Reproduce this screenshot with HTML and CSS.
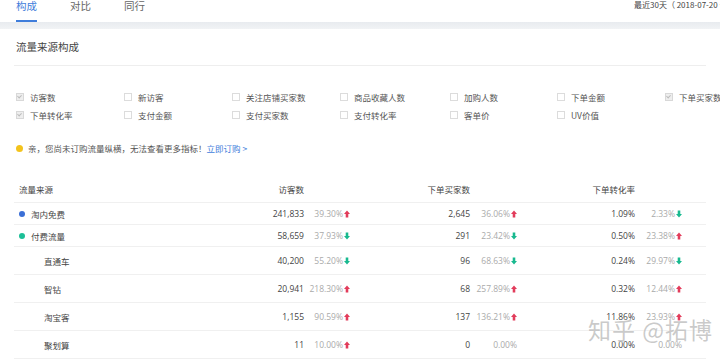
FILE: index.html
```html
<!DOCTYPE html>
<html lang="zh-CN">
<head>
    <meta charset="UTF-8">
    <title>流量来源构成</title>
    <link rel="stylesheet" href="styles.css">
</head>
<body>
    <div class="topbar">
        <a class="tab active">构成</a>
        <a class="tab">对比</a>
        <a class="tab">同行</a>
        <div class="date">最近30天（ 2018-07-20 ~ 2018-08-18 ）</div>
    </div>
    <div class="band"></div>

    <div class="panel">
        <div class="panel-title">流量来源构成</div>

        <div class="metrics">
            <label class="metric"><span class="box checked"></span>访客数</label>
            <label class="metric"><span class="box"></span>新访客</label>
            <label class="metric"><span class="box"></span>关注店铺买家数</label>
            <label class="metric"><span class="box"></span>商品收藏人数</label>
            <label class="metric"><span class="box"></span>加购人数</label>
            <label class="metric"><span class="box"></span>下单金额</label>
            <label class="metric"><span class="box checked"></span>下单买家数</label>
            <label class="metric"><span class="box checked"></span>下单转化率</label>
            <label class="metric"><span class="box"></span>支付金额</label>
            <label class="metric"><span class="box"></span>支付买家数</label>
            <label class="metric"><span class="box"></span>支付转化率</label>
            <label class="metric"><span class="box"></span>客单价</label>
            <label class="metric"><span class="box"></span>UV价值</label>
        </div>

        <div class="notice">
            <span class="notice-dot"></span>
            亲，您尚未订购流量纵横，无法查看更多指标！<a class="link">立即订购 &gt;</a>
        </div>

        <div class="table">
            <div class="row head">
                <div class="name">流量来源</div>
                <div class="num">访客数</div>
                <div></div>
                <div class="num">下单买家数</div>
                <div></div>
                <div class="num">下单转化率</div>
                <div></div>
            </div>
            <div class="row main">
                <div class="name"><span class="dot blue"></span>淘内免费</div>
                <div class="num">241,833</div>
                <div class="pct">39.30%<svg class="arrow up" viewBox="0 0 7 8"><path d="M3.5 0 L7 4 L5 4 L5 8 L2 8 L2 4 L0 4 Z"/></svg></div>
                <div class="num">2,645</div>
                <div class="pct">36.06%<svg class="arrow up" viewBox="0 0 7 8"><path d="M3.5 0 L7 4 L5 4 L5 8 L2 8 L2 4 L0 4 Z"/></svg></div>
                <div class="num">1.09%</div>
                <div class="pct">2.33%<svg class="arrow down" viewBox="0 0 7 8"><path d="M3.5 8 L7 4 L5 4 L5 0 L2 0 L2 4 L0 4 Z"/></svg></div>
            </div>
            <div class="row main">
                <div class="name"><span class="dot green"></span>付费流量</div>
                <div class="num">58,659</div>
                <div class="pct">37.93%<svg class="arrow down" viewBox="0 0 7 8"><path d="M3.5 8 L7 4 L5 4 L5 0 L2 0 L2 4 L0 4 Z"/></svg></div>
                <div class="num">291</div>
                <div class="pct">23.42%<svg class="arrow down" viewBox="0 0 7 8"><path d="M3.5 8 L7 4 L5 4 L5 0 L2 0 L2 4 L0 4 Z"/></svg></div>
                <div class="num">0.50%</div>
                <div class="pct">23.38%<svg class="arrow up" viewBox="0 0 7 8"><path d="M3.5 0 L7 4 L5 4 L5 8 L2 8 L2 4 L0 4 Z"/></svg></div>
            </div>
            <div class="row sub">
                <div class="name">直通车</div>
                <div class="num">40,200</div>
                <div class="pct">55.20%<svg class="arrow down" viewBox="0 0 7 8"><path d="M3.5 8 L7 4 L5 4 L5 0 L2 0 L2 4 L0 4 Z"/></svg></div>
                <div class="num">96</div>
                <div class="pct">68.63%<svg class="arrow down" viewBox="0 0 7 8"><path d="M3.5 8 L7 4 L5 4 L5 0 L2 0 L2 4 L0 4 Z"/></svg></div>
                <div class="num">0.24%</div>
                <div class="pct">29.97%<svg class="arrow down" viewBox="0 0 7 8"><path d="M3.5 8 L7 4 L5 4 L5 0 L2 0 L2 4 L0 4 Z"/></svg></div>
            </div>
            <div class="row sub">
                <div class="name">智钻</div>
                <div class="num">20,941</div>
                <div class="pct">218.30%<svg class="arrow up" viewBox="0 0 7 8"><path d="M3.5 0 L7 4 L5 4 L5 8 L2 8 L2 4 L0 4 Z"/></svg></div>
                <div class="num">68</div>
                <div class="pct">257.89%<svg class="arrow up" viewBox="0 0 7 8"><path d="M3.5 0 L7 4 L5 4 L5 8 L2 8 L2 4 L0 4 Z"/></svg></div>
                <div class="num">0.32%</div>
                <div class="pct">12.44%<svg class="arrow up" viewBox="0 0 7 8"><path d="M3.5 0 L7 4 L5 4 L5 8 L2 8 L2 4 L0 4 Z"/></svg></div>
            </div>
            <div class="row sub">
                <div class="name">淘宝客</div>
                <div class="num">1,155</div>
                <div class="pct">90.59%<svg class="arrow up" viewBox="0 0 7 8"><path d="M3.5 0 L7 4 L5 4 L5 8 L2 8 L2 4 L0 4 Z"/></svg></div>
                <div class="num">137</div>
                <div class="pct">136.21%<svg class="arrow up" viewBox="0 0 7 8"><path d="M3.5 0 L7 4 L5 4 L5 8 L2 8 L2 4 L0 4 Z"/></svg></div>
                <div class="num">11.86%</div>
                <div class="pct">23.93%<svg class="arrow up" viewBox="0 0 7 8"><path d="M3.5 0 L7 4 L5 4 L5 8 L2 8 L2 4 L0 4 Z"/></svg></div>
            </div>
            <div class="row sub">
                <div class="name">聚划算</div>
                <div class="num">11</div>
                <div class="pct">10.00%<svg class="arrow up" viewBox="0 0 7 8"><path d="M3.5 0 L7 4 L5 4 L5 8 L2 8 L2 4 L0 4 Z"/></svg></div>
                <div class="num">0</div>
                <div class="pct">0.00%</div>
                <div class="num">0.00%</div>
                <div class="pct">0.00%</div>
            </div>
        </div>
    </div>

    <div class="watermark">知乎 @拓博</div>
</body>
</html>
```

FILE: styles.css
```css
body {
    margin: 0;
    background: #fff;
    font-family: "Open Sans", "Noto Sans CJK SC", sans-serif;
    color: #333;
    overflow: hidden;
}
.topbar {
    display: flex;
    height: 22px;
    padding-left: 16px;
    gap: 33px;
    font-family: "Noto Sans CJK SC", sans-serif;
}
.tab {
    font-size: 10.5px;
    line-height: 12px;
    color: #666;
    height: 20px;
    border-bottom: 2px solid transparent;
}
.tab.active {
    color: #3f7ddb;
    border-bottom-color: #3f7ddb;
}
.date {
    margin-left: auto;
    width: 86px;
    font-size: 8px;
    line-height: 10px;
    white-space: nowrap;
    overflow: hidden;
    color: #444;
}
.band {
    height: 7px;
    background: linear-gradient(#e8ebef, #f1f3f5);
}
.panel {
    padding: 0 14px;
    position: relative;
}
.panel-title {
    height: 36px;
    line-height: 36px;
    padding-left: 2px;
    font-family: "Noto Sans CJK SC", sans-serif;
    font-size: 10.5px;
    color: #444;
    border-bottom: 1px solid #eee;
}

/* metric checkboxes */
.metrics {
    display: grid;
    grid-template-columns: 108px 108px 108px 110px 107px 108px 60px;
    grid-auto-rows: 18px;
    padding: 22px 0 0 2px;
    font-family: "Noto Sans CJK SC", sans-serif;
    font-size: 8.5px;
    color: #555;
}
.metric {
    display: flex;
    align-items: center;
    white-space: nowrap;
}
.box {
    width: 6px;
    height: 6px;
    border: 1px solid #dcdcdc;
    margin-right: 6px;
    background: #fff;
    position: relative;
}
.box.checked {
    background: #eee;
    border-color: #d8d8d8;
}
.box.checked::after {
    content: "";
    position: absolute;
    left: 1px;
    top: 0;
    width: 2px;
    height: 3px;
    border: solid #bbb;
    border-width: 0 1px 1px 0;
    transform: rotate(45deg);
}
.notice {
    display: flex;
    align-items: center;
    height: 16px;
    margin-top: 16px;
    padding-left: 2px;
    font-family: "Noto Sans CJK SC", sans-serif;
    font-size: 8.5px;
    color: #555;
}
.notice-dot {
    width: 7px;
    height: 7px;
    border-radius: 50%;
    background: #f3c31c;
    margin-right: 5px;
}
.link {
    color: #3f7ddb;
}

/* table */
.table {
    margin-top: 19px;
    width: 692px;
}
.row {
    display: grid;
    grid-template-columns: 226px 64px 46px 120px 47px 118px 47px 1fr;
    align-items: center;
    border-bottom: 1px solid #f0f0f0;
    font-size: 8.5px;
}
.row.head {
    height: 27px;
    font-family: "Noto Sans CJK SC", sans-serif;
    color: #555;
}
.row.main {
    height: 21px;
}
.row.sub {
    height: 27px;
}
.name {
    display: flex;
    align-items: center;
    padding-left: 5px;
    font-family: "Noto Sans CJK SC", sans-serif;
    color: #444;
}
.sub .name {
    padding-left: 30px;
}
.dot {
    width: 6px;
    height: 6px;
    border-radius: 50%;
    margin-right: 6px;
}
.dot.blue {
    background: #3b6fd6;
}
.dot.green {
    background: #1cbf97;
}
.num {
    text-align: right;
    color: #444;
}
.pct {
    display: flex;
    justify-content: flex-end;
    align-items: center;
    color: #aaa;
}
.arrow {
    width: 6px;
    height: 8px;
    margin-left: 1px;
}
.arrow.up {
    fill: #e23c5b;
}
.arrow.down {
    fill: #18b98f;
}
.watermark {
    position: absolute;
    left: 588px;
    top: 312px;
    font-family: "Noto Sans CJK SC", sans-serif;
    font-size: 23px;
    color: rgba(150, 150, 150, 0.5);
    text-shadow: 0 0 2px #fff;
    letter-spacing: 1px;
    white-space: nowrap;
}
```
